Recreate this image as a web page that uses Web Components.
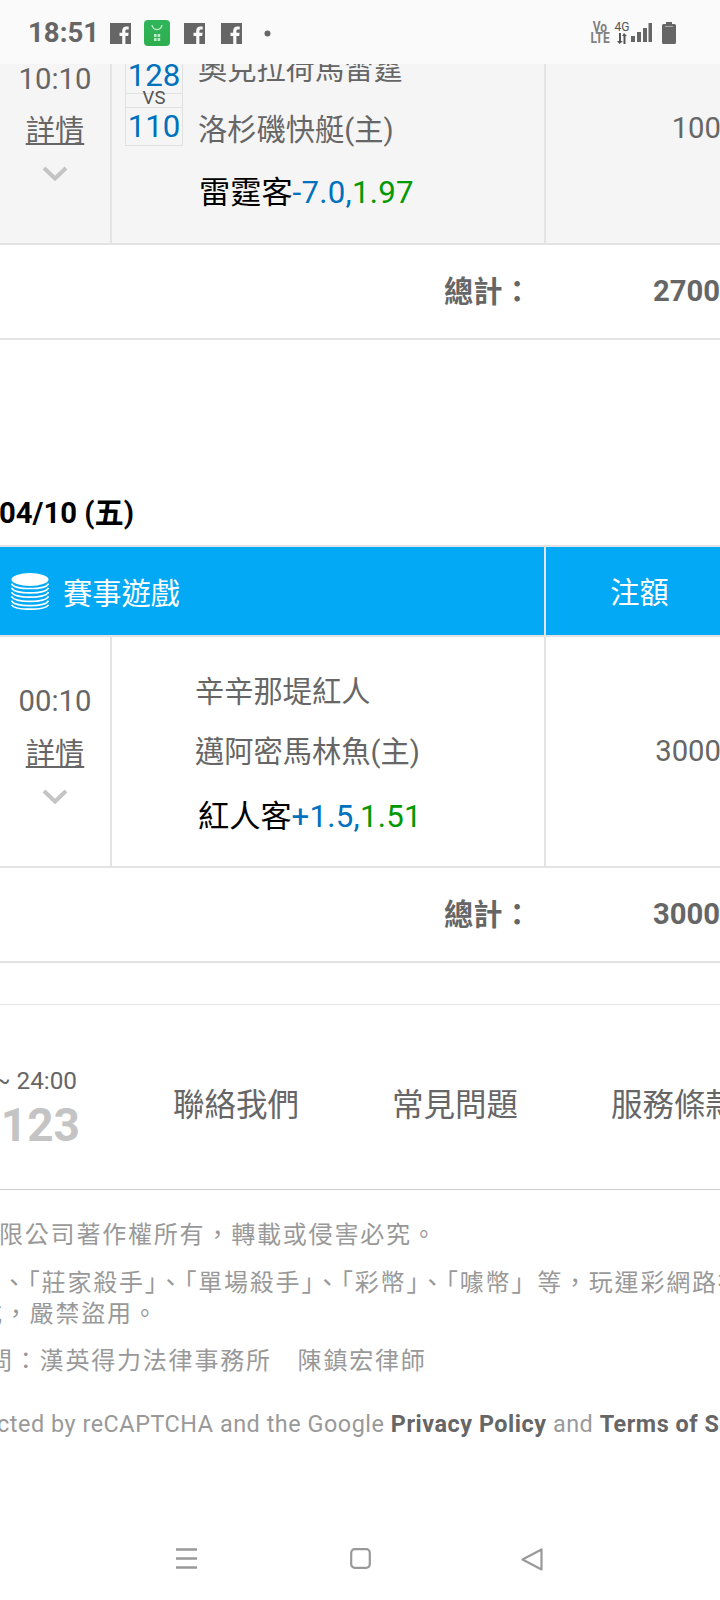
<!DOCTYPE html>
<html lang="zh-Hant">
<head>
<meta charset="utf-8">
<title>投注紀錄</title>
<style>
html,body{margin:0;padding:0;background:#fff;overflow:hidden}
body{width:720px;height:1600px;font-family:Roboto,"Noto Sans CJK TC",sans-serif;color:#666}
</style>
</head>
<body>
<app-shell>
  <status-bar slot="status"></status-bar>

  <bet-table style="margin-top:-51px" hide-head>
    <bet-row tinted time="10:10" amount="100" row-h="230px" time-top="46px" link-gap="12px" amount-top="95px">
      <score-box slot="score" a="128" b="110"></score-box>
      <team-lines top="36px" gap1="21px" gap2="23px" indent="15px" bet-indent="1px" home="奧克拉荷馬雷霆" away="洛杉磯快艇(主)" pick="雷霆客" line="-7.0," odds="1.97"></team-lines>
    </bet-row>
    <total-row slot="total" value="2700"></total-row>
  </bet-table>

  <day-title>04/10 (五)</day-title>

  <bet-table>
    <bet-row time="00:10" amount="3000" row-h="229px" time-top="44px" link-gap="13px" amount-top="94px">
      <team-lines top="35px" gap1="20px" gap2="25px" indent="83px" bet-indent="3px" home="辛辛那堤紅人" away="邁阿密馬林魚(主)" pick="紅人客" line="+1.5," odds="1.51"></team-lines>
    </bet-row>
    <total-row slot="total" value="3000"></total-row>
  </bet-table>

  <site-footer></site-footer>
  <nav-bar slot="nav"></nav-bar>
</app-shell>

<script>
function mount(el, html){
  const r = el.attachShadow({mode:'open'});
  r.innerHTML = html;
  return r;
}
const attr = (el,n,d='') => el.getAttribute(n) ?? d;

customElements.define('app-shell', class extends HTMLElement{
  constructor(){super();mount(this,`<style>
    :host{display:flex;flex-direction:column;width:720px;height:1600px;overflow:hidden;background:#fff}
    .main{flex:1;min-height:0;overflow:hidden}
  </style><slot name="status"></slot><div class="main"><slot></slot></div><slot name="nav"></slot>`);}
});

customElements.define('status-bar', class extends HTMLElement{
  constructor(){super();
    const fb = `<svg width="21" height="21" viewBox="0 0 21 21"><path fill="#666" d="M0 0H21V21H15.4V13H18.2L18.6 9.8H15.4V8C15.4 7 15.7 6.4 17 6.4H18.7V3.5C18.3 3.4 17.4 3.4 16.4 3.4C14 3.4 12.2 4.9 12.2 7.6V9.8H9.5V13H12.2V21H0Z"/></svg>`;
    mount(this,`<style>
    :host{display:flex;position:relative;z-index:2;align-items:center;height:64px;flex:none;background:#fafafa;color:#666;box-sizing:border-box;padding:2px 0 0 28px}
    .t{font:700 27.6px/1 Roboto,sans-serif;width:82px;flex:none}
    svg{display:block;flex:none}
    .g1{margin-left:13px}.g2{margin-left:14px}.g3{margin-left:16px}.d{margin-left:22px}
    .sp{flex:1}
    .vo{font:700 15px/11px Roboto,sans-serif;width:18px;flex:none;text-align:center;color:#808080;display:flex;flex-direction:column;align-items:center}
    .vo span{display:block;transform:scaleX(.8);white-space:nowrap}
    .fg{font:400 12px/11px Roboto,sans-serif;margin-left:5px;width:16px;flex:none;color:#555;text-align:center}
    .fg svg{margin:0 auto}
    .bat{margin:0 44px 0 10px}
  </style>
  <span class="t">18:51</span>
  ${fb}
  <svg class="g1" width="26" height="26" viewBox="0 0 26 26"><defs><linearGradient id="g" x1="0" y1="0" x2="0" y2="1"><stop offset="0" stop-color="#2fb65a"/><stop offset="1" stop-color="#2eae4e"/></linearGradient></defs><rect width="26" height="26" rx="4" fill="url(#g)"/><path d="M8 5C8.6 8.6 10.4 9.6 13 9.6S17.4 8.6 18 5" fill="none" stroke="#c9f0d4" stroke-width="1.3"/><path fill="#bdebc9" d="M10 14h2.6v3H10zM13.6 14h2.6v3h-2.6zM10 18h2.6v3H10zM13.6 18h2.6v3h-2.6z"/></svg>
  <span class="g2" style="display:block">${fb}</span>
  <span class="g3" style="display:block">${fb}</span>
  <svg class="d" width="7" height="7" viewBox="0 0 7 7"><circle cx="3.5" cy="3.5" r="3" fill="#666"/></svg>
  <span class="sp"></span>
  <span class="vo"><span>Vo</span><span>LTE</span></span>
  <span class="fg">4G<svg width="12" height="11" viewBox="0 0 12 11"><path fill="#555" d="M3 0h2v8h2L3.500 11L1 8h2zM8 0L11 3H9.500V11h-2V3H6z"/></svg></span>
  <svg width="22" height="22" viewBox="0 0 22 22"><path fill="#666" d="M1 14h4v6H1zM7 10h4v10H7zM13 6h4v14h-4zM18.500 1h3.500v19h-3.500z"/></svg>
  <svg class="bat" width="14" height="22" viewBox="0 0 14 22"><path fill="#666" d="M4 0h6v2h2.500a1.500 1.500 0 0 1 1.500 1.500V20.500a1.500 1.500 0 0 1-1.500 1.500h-11A1.500 1.500 0 0 1 0 20.500V3.500A1.500 1.500 0 0 1 1.500 2H4z"/><path fill="#aaa" d="M3 4h8v1H3z"/></svg>`);}
});

customElements.define('bet-table', class extends HTMLElement{
  constructor(){super();
    const head = this.hasAttribute('hide-head') ? '' : `<div class="head">
      <div class="c1"><svg width="38" height="37" viewBox="0 0 38 37"><ellipse cx="19" cy="6.500" rx="18.500" ry="6.500" fill="#fff"/><g fill="none" stroke="#fff" stroke-width="1.700"><path d="M.5 10.500C2 14 10 15.500 19 15.500S36 14 37.500 10.500"/><path d="M.5 14.800C2 18.300 10 19.800 19 19.800S36 18.300 37.500 14.800"/><path d="M.5 19.100C2 22.600 10 24.100 19 24.100S36 22.600 37.500 19.100"/><path d="M.5 23.400C2 26.900 10 28.400 19 28.400S36 26.900 37.500 23.400"/><path d="M.5 27.700C2 31.200 10 32.700 19 32.700S36 31.200 37.500 27.700"/><path d="M.5 31.800C2 34.600 10 36.200 19 36.200S36 34.600 37.500 31.800"/></g></svg><span>賽事遊戲</span></div>
      <div class="c2">注額</div></div>`;
    mount(this,`<style>
    :host{display:block;width:733px}
    .head{display:flex;height:88px;background:#03a9f4;color:#fff;border-top:2px solid #e3e3e3;border-bottom:2px solid #e3e3e3;font-size:29.25px;line-height:40px}
    .c1{box-sizing:border-box;width:544px;display:flex;align-items:center;padding-left:11px;gap:14px}
    .c1 svg{flex:none}
    .c1 span{margin-top:6px}
    .c2{flex:1;border-left:2px solid #e3e3e3;text-align:center;padding-top:26px;box-sizing:border-box;height:88px;line-height:40px}
  </style>${head}<slot></slot><slot name="total"></slot>`);}
});

customElements.define('bet-row', class extends HTMLElement{
  constructor(){super();
    mount(this,`<style>
    :host{display:flex;height:${attr(this,'row-h','230px')};border-bottom:2px solid #e3e3e3;background:${this.hasAttribute('tinted')?'#f5f5f5':'#fff'};color:#666;font-size:29.25px;line-height:40px}
    .time{width:110px;flex:none;box-sizing:border-box;padding-top:${attr(this,'time-top','45px')};text-align:center}
    .time a{display:block;margin-top:${attr(this,'link-gap','12px')};color:#666;text-decoration:underline;text-underline-offset:2px}
    .time svg{display:block;margin:15px auto 0}
    .team{flex:none;display:flex;align-items:flex-start;border-left:2px solid #e3e3e3;box-sizing:border-box;width:434px}
    .amt{flex:1;border-left:2px solid #e3e3e3;text-align:right;padding:${attr(this,'amount-top','93px')} 12px 0 0}
    ::slotted([slot=score]){margin:42px 0 0 13px}
  </style>
  <div class="time"><div>${attr(this,'time')}</div><a>詳情</a><svg width="26" height="15" viewBox="0 0 26 15"><path d="M2 2L13 12.500L24 2" fill="none" stroke="#c4c4c4" stroke-width="4"/></svg></div>
  <div class="team"><slot name="score"></slot><slot></slot></div>
  <div class="amt">${attr(this,'amount')}</div>`);}
});

customElements.define('score-box', class extends HTMLElement{
  constructor(){super();
    mount(this,`<style>
    :host{display:block;flex:none;width:58px;box-sizing:border-box;border:1px solid #e0e0e0;color:#0071bc;text-align:center;font-size:31.2px}
    div{height:37px;line-height:40px}
    .v{height:13px;border-top:1px solid #e0e0e0;border-bottom:1px solid #e0e0e0;font-size:18.500px;line-height:8px;color:#555;overflow:visible}
    .b{line-height:37px}
  </style><div>${attr(this,'a')}</div><div class="v">VS</div><div class="b">${attr(this,'b')}</div>`);}
});

customElements.define('team-lines', class extends HTMLElement{
  constructor(){super();
    mount(this,`<style>
    :host{display:block;padding:${attr(this,'top')} 0 0 ${attr(this,'indent')};white-space:nowrap;font-size:29.25px;line-height:40px;color:#666}
    .a{margin-top:${attr(this,'gap1')}}
    .p{margin:${attr(this,'gap2')} 0 0 ${attr(this,'bet-indent')};font-size:31.2px;color:#000}
    .l{color:#0071bc;letter-spacing:.25px}.o{color:#090;letter-spacing:.25px}
  </style><div>${attr(this,'home')}</div><div class="a">${attr(this,'away')}</div><div class="p">${attr(this,'pick')}<span class="l">${attr(this,'line')}</span><span class="o">${attr(this,'odds')}</span></div>`);}
});

customElements.define('total-row', class extends HTMLElement{
  constructor(){super();
    mount(this,`<style>
    :host{display:flex;height:93px;border-bottom:2px solid #e3e3e3;background:#fff;color:#666;font-weight:700;font-size:29.25px;line-height:40px;white-space:nowrap}
    .l{margin-left:444px;width:209px;flex:none;padding-top:27px}
    .v{padding-top:26px}
  </style><div class="l">總計：</div><div class="v">${attr(this,'value')}</div>`);}
});

customElements.define('day-title', class extends HTMLElement{
  constructor(){super();
    mount(this,`<style>
    :host{display:block;margin:153px 0 12px -1px;height:40px;color:#000;font-weight:700;font-size:29.25px;line-height:40px;white-space:nowrap}
  </style><slot></slot>`);}
});

customElements.define('site-footer', class extends HTMLElement{
  constructor(){super();
    mount(this,`<style>
    :host{display:block;margin-top:41px;width:720px;overflow:hidden;color:#999;border-top:1px solid #e6e6e6}
    .top{display:flex;box-sizing:border-box;padding-top:60px;border-bottom:1px solid #ccc;height:185px;white-space:nowrap}
    .ct{width:80px;flex:none;text-align:right}
    .h{font-size:24.300px;line-height:32px;color:#666;margin:0 3px 0 -12px}
    .n{font-size:46px;font-weight:700;line-height:52px;margin-top:2px;color:#c4c4c4}
    .links{display:flex;gap:93px;margin:19px 0 0 93px;color:#666;font-size:31.500px;line-height:44px}
    .txt{padding-top:30px;font-size:24px;line-height:30px;letter-spacing:1.800px;white-space:nowrap}
    .txt div{height:30px}
    .r{font-size:23.400px;letter-spacing:.53px}
    b{color:#666}
  </style>
  <div class="top">
    <div class="ct"><div class="h">~ 24:00</div><div class="n">123</div></div>
    <div class="links"><span>聯絡我們</span><span>常見問題</span><span>服務條款</span></div>
  </div>
  <div class="txt">
    <div style="margin-left:-1px">限公司著作權所有，轉載或侵害必究。</div>
    <div style="margin:18px 0 0 2px">、「莊家殺手」、「單場殺手」、「彩幣」、「噱幣」等，玩運彩網路社群</div>
    <div style="margin:1px 0 0 -22px">式，嚴禁盜用。</div>
    <div style="margin:17px 0 0 -12px">問：漢英得力法律事務所　陳鎮宏律師</div>
    <div class="r" style="margin:33px 0 0 -3px">cted by reCAPTCHA and the Google <b>Privacy Policy</b> and <b>Terms of Service</b> apply.</div>
  </div>`);}
});

customElements.define('nav-bar', class extends HTMLElement{
  constructor(){super();
    mount(this,`<style>
    :host{display:flex;flex:none;height:84px;box-sizing:border-box;padding:32px 0 0 176px;background:#fff}
    svg{display:block;flex:none}
    .s{margin-left:153px}.b{margin-left:150px}
  </style>
  <svg width="21" height="21" viewBox="0 0 21 21"><path d="M0 1.500H21M0 10.500H21M0 19.500H21" stroke="#999" stroke-width="2.400" fill="none"/></svg>
  <svg class="s" width="21" height="21" viewBox="0 0 21 21"><rect x="1.200" y="1.200" width="18.600" height="18.600" rx="3.500" fill="none" stroke="#999" stroke-width="2.200"/></svg>
  <svg class="b" width="22" height="23" viewBox="0 0 22 23"><path d="M20.500 1.500V21.500L1.500 11.500Z" fill="none" stroke="#999" stroke-width="2.200" stroke-linejoin="round"/></svg>`);}
});
</script>
</body>
</html>
